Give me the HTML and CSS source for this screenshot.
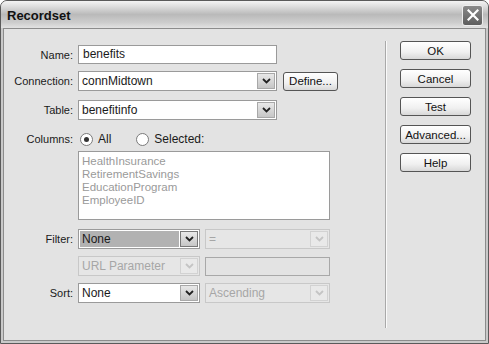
FILE: index.html
```html
<!DOCTYPE html>
<html lang="en">
<head>
<meta charset="UTF-8">
<title>Recordset</title>
<link rel="stylesheet" href="styles.css">
</head>
<body>

<div class="window">
  <div class="titlebar">
    <span class="title">Recordset</span>
    <span class="close">
      <svg width="12" height="12" viewBox="0 0 12 12"><path d="M1.5 1.5 L10.5 10.5 M10.5 1.5 L1.5 10.5" stroke="#fff" stroke-width="2.2" stroke-linecap="square"/></svg>
    </span>
  </div>

  <div class="content">
    <div class="form">
      <div class="row r-name">
        <label>Name:</label>
        <div class="field text wide">benefits</div>
      </div>

      <div class="row r-conn">
        <label>Connection:</label>
        <div class="select wide">
          <span class="value">connMidtown</span>
          <span class="arrow"><svg width="9" height="6" viewBox="0 0 9 6"><path d="M1 1 L4.5 4.5 L8 1" fill="none" stroke="#222" stroke-width="1.8"/></svg></span>
        </div>
        <button class="btn define">Define...</button>
      </div>

      <div class="row r-table">
        <label>Table:</label>
        <div class="select wide">
          <span class="value">benefitinfo</span>
          <span class="arrow"><svg width="9" height="6" viewBox="0 0 9 6"><path d="M1 1 L4.5 4.5 L8 1" fill="none" stroke="#222" stroke-width="1.8"/></svg></span>
        </div>
      </div>

      <div class="row r-cols">
        <label>Columns:</label>
        <span class="radio on"></span><span class="rlabel">All</span>
        <span class="radio"></span><span class="rlabel">Selected:</span>
      </div>

      <div class="row r-list">
        <label></label>
        <div class="listbox">
          <div>HealthInsurance</div>
          <div>RetirementSavings</div>
          <div>EducationProgram</div>
          <div>EmployeeID</div>
        </div>
      </div>

      <div class="row r-filter">
        <label>Filter:</label>
        <div class="select half focus">
          <span class="value">None</span>
          <span class="arrow"><svg width="9" height="6" viewBox="0 0 9 6"><path d="M1 1 L4.5 4.5 L8 1" fill="none" stroke="#222" stroke-width="1.8"/></svg></span>
        </div>
        <div class="select half2 off">
          <span class="value">=</span>
          <span class="arrow"><svg width="9" height="6" viewBox="0 0 9 6"><path d="M1 1 L4.5 4.5 L8 1" fill="none" stroke="#c4c4c4" stroke-width="1.8"/></svg></span>
        </div>
      </div>

      <div class="row r-param">
        <label></label>
        <div class="select half off">
          <span class="value">URL Parameter</span>
          <span class="arrow"><svg width="9" height="6" viewBox="0 0 9 6"><path d="M1 1 L4.5 4.5 L8 1" fill="none" stroke="#c4c4c4" stroke-width="1.8"/></svg></span>
        </div>
        <div class="field half2 off"></div>
      </div>

      <div class="row r-sort">
        <label>Sort:</label>
        <div class="select half">
          <span class="value">None</span>
          <span class="arrow"><svg width="9" height="6" viewBox="0 0 9 6"><path d="M1 1 L4.5 4.5 L8 1" fill="none" stroke="#222" stroke-width="1.8"/></svg></span>
        </div>
        <div class="select half2 off">
          <span class="value">Ascending</span>
          <span class="arrow"><svg width="9" height="6" viewBox="0 0 9 6"><path d="M1 1 L4.5 4.5 L8 1" fill="none" stroke="#c4c4c4" stroke-width="1.8"/></svg></span>
        </div>
      </div>
    </div>

    <div class="actions">
      <button class="btn side">OK</button>
      <button class="btn side">Cancel</button>
      <button class="btn side">Test</button>
      <button class="btn side">Advanced...</button>
      <button class="btn side">Help</button>
    </div>
  </div>
</div>

</body>
</html>
```

FILE: styles.css
```css
body {
  margin: 0;
  background: #fff;
  font-family: "Liberation Sans", Arial, sans-serif;
  font-size: 11px;
  color: #1a1a1a;
}

.window {
  width: 489px;
  height: 344px;
  box-sizing: border-box;
  border: 1px solid #5a5a5a;
  border-radius: 7px 7px 0 0;
  background: #c9c9c9;
  display: flex;
  flex-direction: column;
  overflow: hidden;
}

.titlebar {
  height: 27px;
  flex: none;
  display: flex;
  align-items: center;
  justify-content: space-between;
  padding: 0 5px 0 6px;
  background: linear-gradient(#f4f4f4 0%, #dedede 20%, #bababa 50%, #cdcdcd 80%, #e2e2e2 100%);
}

.title {
  font-weight: bold;
  font-size: 13px;
  color: #111;
  margin-top: 2px;
}

.close {
  width: 19px;
  height: 19px;
  border: 1px solid #eee;
  border-radius: 3px;
  background: linear-gradient(#8a8a8a, #5e5e5e);
  display: flex;
  align-items: center;
  justify-content: center;
  margin-top: 1px;
}

.content {
  flex: 1;
  margin: 0 2px 2px 2px;
  border: 1px solid #8c8c8c;
  background: #e3e3e3;
  display: flex;
}

.form {
  width: 381px;
  flex: none;
}

.row {
  display: flex;
  align-items: center;
  gap: 5px;
}

.row label {
  width: 69px;
  flex: none;
  text-align: right;
}

.r-name { margin-top: 16px; height: 19px; }
.r-conn { margin-top: 7px; height: 20px; }
.r-table { margin-top: 9px; height: 20px; }
.r-cols { margin-top: 11px; height: 16px; }
.r-list { margin-top: 4px; align-items: flex-start; }
.r-filter { margin-top: 9px; height: 19px; }
.r-param { margin-top: 8px; height: 20px; }
.r-sort { margin-top: 7px; height: 20px; }

.field {
  height: 19px;
  box-sizing: border-box;
  border: 1px solid #9a9a9a;
  background: #fff;
  padding-left: 4px;
  line-height: 17px;
  font-size: 12px;
}

.wide { width: 199px; }
.half { width: 122px; }
.half2 { width: 125px; }

.select {
  height: 20px;
  box-sizing: border-box;
  border: 1px solid #9a9a9a;
  background: #fff;
  display: flex;
  align-items: stretch;
}

.select .value {
  flex: 1;
  padding-left: 3px;
  line-height: 18px;
  font-size: 12px;
}

.select .arrow {
  width: 16px;
  margin: 1px;
  border: 1px solid #a8a8a8;
  background: linear-gradient(#e8e8e8, #c6c6c6);
  display: flex;
  align-items: center;
  justify-content: center;
}

.select.focus .value {
  background: #b2b2b2;
  margin: 1px 0 1px 1px;
  padding-left: 2px;
  line-height: 16px;
}

.select.focus .arrow {
  border-color: #777;
}

.off {
  background: #e6e6e6;
  border-color: #c8c8c8;
  color: #a6a6a6;
}

.select.off .arrow {
  background: #e9e9e9;
  border-color: #d2d2d2;
}

.field.off {
  border-color: #a8a8a8;
  background: #e3e3e3;
}

.radio {
  width: 11px;
  height: 11px;
  border: 1px solid #7a7a7a;
  border-radius: 50%;
  background: #fff;
  position: relative;
  flex: none;
  margin-left: 2px;
}

.radio.on::after {
  content: "";
  position: absolute;
  left: 3px;
  top: 3px;
  width: 5px;
  height: 5px;
  border-radius: 50%;
  background: #333;
}

.rlabel {
  font-size: 12px;
  margin-right: 18px;
}

.listbox {
  width: 252px;
  height: 69px;
  box-sizing: border-box;
  border: 1px solid #9a9a9a;
  background: #fff;
  padding: 3px 3px;
  color: #9a9a9a;
  font-size: 11.5px;
  line-height: 13px;
}

.btn {
  font-family: "Liberation Sans", Arial, sans-serif;
  font-size: 11.5px;
  color: #111;
  height: 19px;
  padding: 0;
  border: 1px solid #555;
  border-radius: 3px;
  background: linear-gradient(#ffffff, #f0f0f0 60%, #d8d8d8);
}

.define {
  width: 55px;
  margin-left: 1px;
}

.actions {
  flex: 1;
  margin: 12px 0 12px 0;
  border-left: 1px solid #a9a9a9;
  box-shadow: inset 1px 0 0 #fafafa;
  display: flex;
  flex-direction: column;
  gap: 9px;
  padding: 0 0 0 14px;
}

.actions .side {
  width: 71px;
}
```
